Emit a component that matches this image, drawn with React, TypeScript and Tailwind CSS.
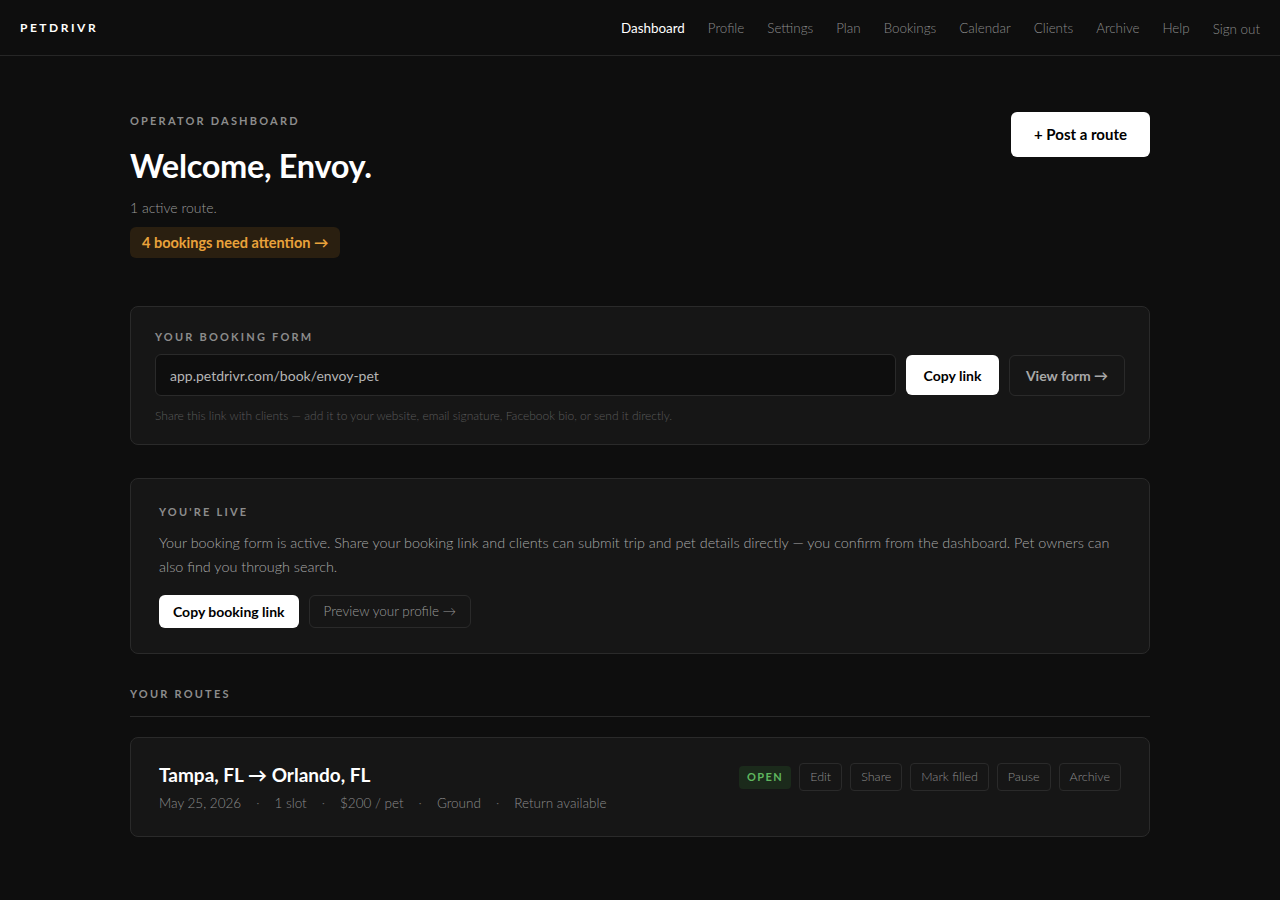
import React from "react";

const font = { fontFamily: "Lato, 'Noto Sans', sans-serif" };

export default function App() {
  const nav = ["Dashboard", "Profile", "Settings", "Plan", "Bookings", "Calendar", "Clients", "Archive", "Help"];
  return (
    <div className="min-h-[900px] bg-[#0e0e0e] text-white" style={font}>
      <header className="h-[56px] border-b border-[#262626] flex items-center justify-between px-5">
        <div className="text-[12px] font-bold tracking-[0.21em] text-white">PETDRIVR</div>
        <nav className="flex items-center gap-[23px] text-[13.4px] font-light pt-[2px]">
          {nav.map((n, i) => (
            <a key={n} className={i === 0 ? "text-white font-normal" : "text-[#8c8c8c]"}>{n}</a>
          ))}
          <a className="text-[#8c8c8c] mt-[2px]">Sign out</a>
        </nav>
      </header>

      <main className="w-[1020px] mx-auto pt-[57px]">
        <div className="flex justify-between items-start">
          <div>
            <div className="text-[11px] font-bold tracking-[0.2em] text-[#8c8c8c] leading-[16px]">OPERATOR DASHBOARD</div>
            <h1 className="text-[32.5px] font-bold tracking-[-0.01em] leading-[40px] mt-[17px]">Welcome, Envoy.</h1>
            <div className="text-[14px] font-light text-[#9a9a9a] mt-[12px] leading-[20px]">1 active route.</div>
            <div className="inline-flex items-center mt-[9px] h-[31px] px-3 rounded-md bg-[#2a1f10] text-[#e9a23b] text-[14.5px] font-bold">4 bookings need attention →</div>
          </div>
          <button className="-mt-px h-[45px] w-[139px] rounded-md bg-white text-black text-[15px] font-bold">+ Post a route</button>
        </div>

        <section className="mt-[48px] rounded-lg border border-[#2a2a2a] bg-[#161616] px-6 pt-[23px] pb-[21px]">
          <div className="text-[11px] font-bold tracking-[0.2em] text-[#8c8c8c] leading-[14px]">YOUR BOOKING FORM</div>
          <div className="flex items-center gap-[10px] mt-[10px]">
            <div className="flex-1 h-[42px] rounded-md border border-[#2a2a2a] bg-[#0e0e0e] flex items-center px-[14px] text-[14px] text-[#b5b5b5]">app.petdrivr.com/book/envoy-pet</div>
            <button className="h-[40px] w-[93px] rounded-md bg-white text-black text-[14px] font-bold">Copy link</button>
            <button className="h-[41px] w-[116px] rounded-md border border-[#2a2a2a] text-[#a8a8a8] text-[14px] font-bold">View form →</button>
          </div>
          <div className="text-[12px] font-light text-[#5a5a5a] mt-[12px] leading-[15px]">Share this link with clients — add it to your website, email signature, Facebook bio, or send it directly.</div>
        </section>

        <section className="mt-[33px] rounded-lg border border-[#2a2a2a] bg-[#161616] px-7 pt-[26px] pb-[25px]">
          <div className="text-[11px] font-bold tracking-[0.2em] text-[#8c8c8c] leading-[14px]">YOU'RE LIVE</div>
          <p className="text-[14.4px] font-light leading-[24px] text-[#a8a8a8] mt-[12px]">Your booking form is active. Share your booking link and clients can submit trip and pet details directly — you confirm from the dashboard. Pet owners can also find you through search.</p>
          <div className="flex gap-[10px] mt-[16px]">
            <button className="h-[33px] px-[14px] rounded-md bg-white text-black text-[14px] font-bold">Copy booking link</button>
            <button className="h-[33px] px-[14px] rounded-md border border-[#2a2a2a] text-[#9a9a9a] text-[13.5px] font-light">Preview your profile →</button>
          </div>
        </section>

        <div className="mt-[33px] text-[11px] font-bold tracking-[0.2em] text-[#8c8c8c] leading-[14px]">YOUR ROUTES</div>
        <div className="mt-[15px] border-t border-[#2a2a2a]" />

        <section className="mt-[20px] rounded-lg border border-[#2a2a2a] bg-[#161616] px-7 pt-[24px] pb-[23px] flex justify-between items-start">
          <div>
            <div className="text-[19px] font-bold leading-[26px]">Tampa, FL → Orlando, FL</div>
            <div className="flex items-center text-[13.5px] font-light text-[#8c8c8c] mt-[5px]">
              {["May 25, 2026", "1 slot", "$200 / pet", "Ground", "Return available"].map((m, i) => (
                <React.Fragment key={m}>
                  {i > 0 && <span className="mx-[15px] text-[#666]">·</span>}
                  <span>{m}</span>
                </React.Fragment>
              ))}
            </div>
          </div>
          <div className="flex items-center gap-2 mt-[1px]">
            <span className="h-[23px] px-2 rounded bg-[#1b2a1b] text-[#5fb65f] text-[11px] font-bold tracking-[0.13em] flex items-center">OPEN</span>
            {["Edit", "Share", "Mark filled", "Pause", "Archive"].map((b) => (
              <button key={b} className="h-[28px] px-[10px] rounded border border-[#2a2a2a] text-[12.5px] font-light text-[#8c8c8c]">{b}</button>
            ))}
          </div>
        </section>
      </main>
    </div>
  );
}
